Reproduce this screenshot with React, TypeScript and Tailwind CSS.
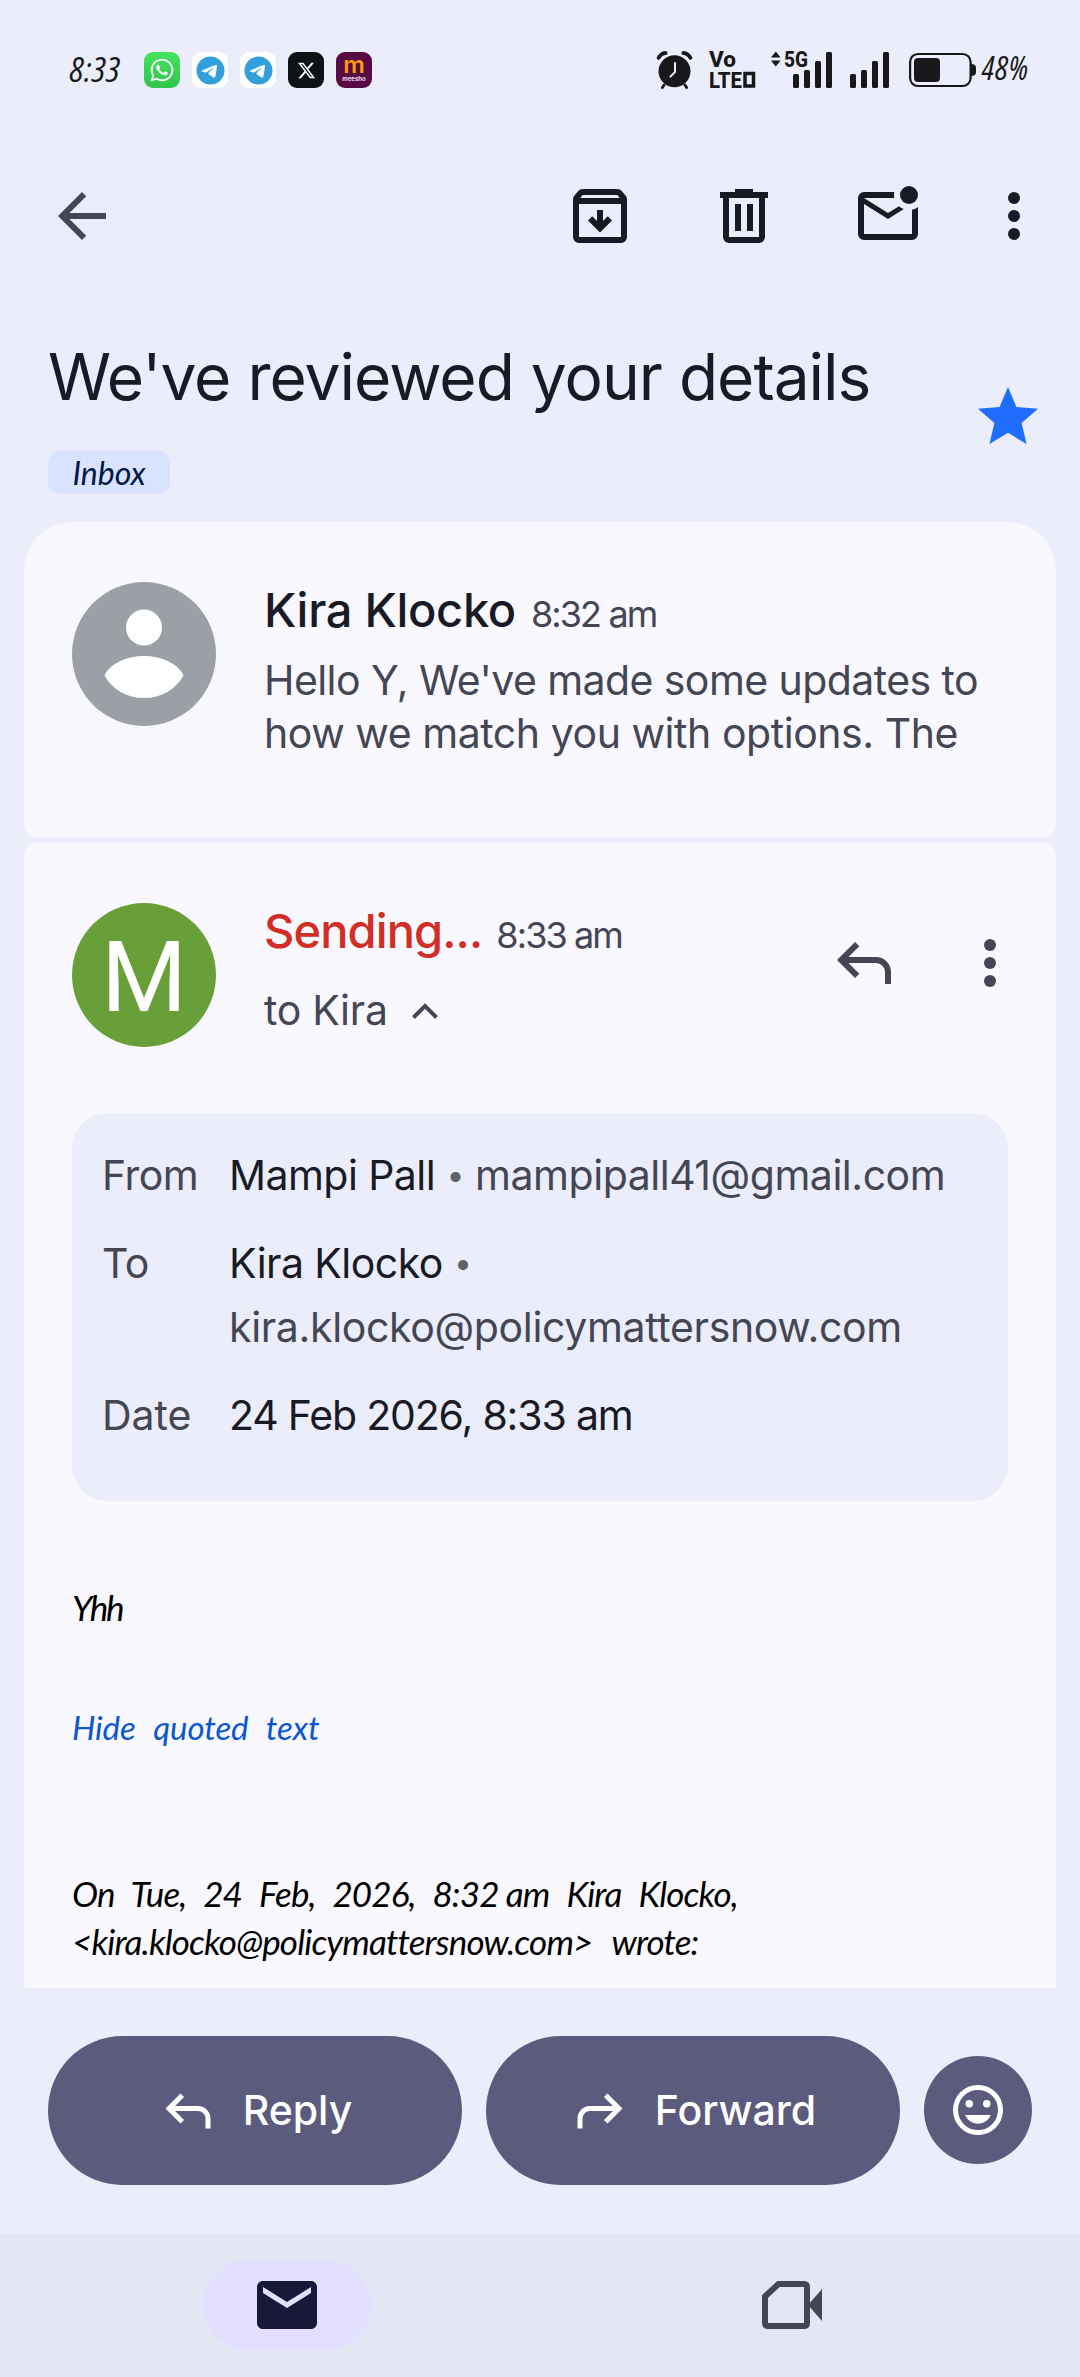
import React from 'react';
import { FaWhatsapp, FaTelegram, FaXTwitter } from 'react-icons/fa6';

type IconProps = { className?: string };

const ArrowBackIcon = ({ className }: IconProps) => (
  <svg viewBox="0 0 24 24" fill="currentColor" className={className}>
    <path d="M20 11H7.83l5.59-5.59L12 4l-8 8 8 8 1.41-1.41L7.83 13H20v-2z" />
  </svg>
);

const ArchiveIcon = ({ className }: IconProps) => (
  <svg viewBox="0 0 24 24" fill="currentColor" className={className}>
    <path
      fillRule="evenodd"
      d="M5 21q-.825 0-1.412-.587T3 19V6.525q0-.35.113-.675t.337-.6L4.7 3.725q.275-.35.687-.538T6.25 3h11.5q.45 0 .863.188t.687.537l1.25 1.525q.225.275.338.6t.112.675V19q0 .825-.587 1.413T19 21zM5.4 6h13.2l-.85-1H6.25zM5 8v11h14V8zM12 17.5l4-4-1.4-1.4-1.6 1.6V10h-2v3.7l-1.6-1.6L8 13.5z"
    />
  </svg>
);

const TrashIcon = ({ className }: IconProps) => (
  <svg viewBox="0 0 24 24" fill="currentColor" className={className}>
    <path
      fillRule="evenodd"
      d="M7 21q-.825 0-1.412-.587T5 19V6H4V4h5V3h6v1h5v2h-1v13q0 .825-.587 1.413T17 21zM17 6H7v13h10zM9 17h2V8H9zm4 0h2V8h-2z"
    />
  </svg>
);

const MarkUnreadIcon = ({ className }: IconProps) => (
  <svg viewBox="0 0 24 24" fill="currentColor" className={className}>
    <path d="M4 20q-.825 0-1.412-.587T2 18V6q0-.825.588-1.412T4 4h10.1q-.1.5-.1 1t.1 1H4l8 5 3.65-2.275q.35.325.763.563t.862.412L12 13 4 8v10h16V9.9q.575-.125 1.075-.35T22 9v9q0 .825-.587 1.413T20 20z" />
    <circle cx="19" cy="5" r="3" />
  </svg>
);

const MoreIcon = ({ className }: IconProps) => (
  <svg viewBox="0 0 24 24" fill="currentColor" className={className}>
    <circle cx="12" cy="6" r="2" />
    <circle cx="12" cy="12" r="2" />
    <circle cx="12" cy="18" r="2" />
  </svg>
);

const StarIcon = ({ className }: IconProps) => (
  <svg viewBox="0 0 24 24" fill="currentColor" className={className}>
    <path d="M12 17.27 18.18 21l-1.64-7.03L22 9.24l-7.19-.61L12 2 9.19 8.63 2 9.24l5.46 4.73L5.82 21z" />
  </svg>
);

const ReplyIcon = ({ className }: IconProps) => (
  <svg viewBox="0 0 24 24" fill="currentColor" className={className}>
    <path d="M19 19v-4q0-1.25-.875-2.125T16 12H6.825l3.6 3.6L9 17l-6-6 6-6 1.425 1.4-3.6 3.6H16q2.075 0 3.538 1.463T21 15v4z" />
  </svg>
);

const EmojiIcon = ({ className }: IconProps) => (
  <svg viewBox="0 0 24 24" className={className}>
    <circle cx="12" cy="12" r="9" fill="none" stroke="currentColor" strokeWidth="2" />
    <circle cx="8.5" cy="9.5" r="1.5" fill="currentColor" />
    <circle cx="15.5" cy="9.5" r="1.5" fill="currentColor" />
    <path d="M12 17.5c2.33 0 4.32-1.45 5.12-3.5H6.88c.8 2.05 2.79 3.5 5.12 3.5z" fill="currentColor" />
  </svg>
);

const MailIcon = ({ className }: IconProps) => (
  <svg viewBox="0 0 24 24" fill="currentColor" className={className}>
    <path d="M20 4H4c-1.1 0-1.99.9-1.99 2L2 18c0 1.1.9 2 2 2h16c1.1 0 2-.9 2-2V6c0-1.1-.9-2-2-2zm0 4-8 5-8-5V6l8 5 8-5v2z" />
  </svg>
);

const MeetIcon = ({ className }: IconProps) => (
  <svg viewBox="0 0 72 72" className={className}>
    <path d="M9 27.5 22.5 15H48q3 0 3 3v36q0 3-3 3H12q-3 0-3-3z" fill="none" stroke="currentColor" strokeWidth="6" />
    <path d="M52 36 66 20v32z" fill="currentColor" />
  </svg>
);

const AlarmIcon = ({ className }: IconProps) => (
  <svg viewBox="0 0 37 38" className={className}>
    <g fill="none" stroke="currentColor" strokeLinecap="round">
      <path d="M2.6 6.8Q5 2.4 9.6 2" strokeWidth="3.8" />
      <path d="M34.4 6.8Q32 2.4 27.4 2" strokeWidth="3.8" />
      <path d="M8 34l-1.6 2.6M29 34l1.6 2.6" strokeWidth="2.8" />
    </g>
    <circle cx="18.5" cy="20.3" r="16" fill="currentColor" />
    <path d="M19 12v9l-4.6 4.6" fill="none" stroke="#ebedfa" strokeWidth="2" strokeLinecap="round" />
  </svg>
);

const SignalBars = () => (
  <>
    <rect x="0" y="23" width="6" height="14" rx="1.5" />
    <rect x="11" y="19" width="6" height="18" rx="1.5" />
    <rect x="22" y="10" width="6" height="27" rx="1.5" />
    <rect x="33" y="1" width="6" height="36" rx="1.5" />
  </>
);

const StatusBar = () => (
  <div className="flex h-[140px] items-center pl-[70px] font-['Open_Sans',sans-serif] text-[#18181b]">
    <div className="-mt-0.5 w-[74px] text-[35px] font-stretch-condensed leading-[40px] tracking-[0.8px] whitespace-nowrap italic">8:33</div>
    <div className="flex gap-3">
      <div className="flex size-9 items-center justify-center rounded-[9px] bg-linear-to-b from-[#45e35f] to-[#2fc64b]">
        <FaWhatsapp className="size-[26px] text-white" />
      </div>
      <div className="flex size-9 items-center justify-center rounded-[9px] bg-white">
        <FaTelegram className="size-[29px] text-[#31a0db]" />
      </div>
      <div className="flex size-9 items-center justify-center rounded-[9px] bg-white">
        <FaTelegram className="size-[29px] text-[#31a0db]" />
      </div>
      <div className="flex size-9 items-center justify-center rounded-[9px] bg-[#0d1217]">
        <FaXTwitter className="size-[19px] text-white" />
      </div>
      <div className="flex size-9 flex-col items-center rounded-[9px] bg-[#570a44] font-['Inter',sans-serif]">
        <span className="mt-[3px] text-[24px] leading-[20px] font-semibold text-[#ff9a0c]">m</span>
        <span className="text-[6px] leading-[7px] font-bold text-[#f4dcec]">meesho</span>
      </div>
    </div>

    <div className="ml-[284px] flex items-center">
      <AlarmIcon className="h-[38px] w-[37px]" />
      <svg viewBox="0 0 47 38" fill="currentColor" className="ml-4 h-[38px] w-[47px] overflow-visible">
        <g fontFamily="Roboto, sans-serif" fontWeight="800" fontSize="22">
          <text x="0" y="16" textLength="27" lengthAdjust="spacingAndGlyphs">
            Vo
          </text>
          <text x="0" y="36.5" textLength="33" lengthAdjust="spacingAndGlyphs">
            LTE
          </text>
        </g>
        <rect x="36" y="22.5" width="8.5" height="12.5" fill="none" stroke="currentColor" strokeWidth="3.5" />
      </svg>
      <svg viewBox="0 0 61 38" fill="currentColor" className="ml-[15px] h-[38px] w-[61px] overflow-visible">
        <path d="M0 6.5 4.8.5l4.8 6zM0 9.5h9.6l-4.8 6z" />
        <text x="13" y="16" fontFamily="Roboto, sans-serif" fontWeight="800" fontSize="22" textLength="24" lengthAdjust="spacingAndGlyphs">
          5G
        </text>
        <g transform="translate(22 0)">
          <SignalBars />
        </g>
      </svg>
      <svg viewBox="0 0 39 38" fill="currentColor" className="ml-[18px] h-[38px] w-[39px]">
        <SignalBars />
      </svg>
      <svg viewBox="0 0 67 36" className="ml-5 h-[36px] w-[67px]">
        <rect x="1.1" y="2" width="60.5" height="32" rx="8" fill="none" stroke="currentColor" strokeWidth="2.2" />
        <rect x="5" y="6" width="26" height="24" rx="4" fill="currentColor" />
        <path d="M62 12q5 0 5 4v4q0 4-5 4z" fill="currentColor" />
      </svg>
      <div className="-mt-[5px] ml-[6px] text-[32px] font-stretch-condensed leading-[40px] tracking-[1.2px] italic">48%</div>
    </div>
  </div>
);

const Toolbar = () => (
  <div className="flex h-[151px] items-center justify-between pr-[30px] pl-[46px] text-[#181a26]">
    <ArrowBackIcon className="size-[72px] text-[#444654]" />
    <div className="flex">
      <ArchiveIcon className="size-[72px]" />
      <TrashIcon className="ml-[72px] size-[72px]" />
      <MarkUnreadIcon className="ml-[72px] size-[72px]" />
      <MoreIcon className="ml-[54px] size-[72px]" />
    </div>
  </div>
);

const Subject = () => (
  <div className="flex h-[231px] justify-between pt-[46px] pr-9 pl-12">
    <div>
      <h1 className="text-[64px] leading-[80px] tracking-[-1px] whitespace-nowrap">We've reviewed your details</h1>
      <span className="mt-[34px] flex h-[43px] w-[122px] items-center justify-center rounded-xl bg-[#d9e2ff] font-['Lato',sans-serif] text-[32px] text-[#001945] italic">
        Inbox
      </span>
    </div>
    <StarIcon className="mt-[44px] size-[72px] text-[#1f6cff]" />
  </div>
);

const PreviousMessage = () => (
  <div className="flex h-[315px] rounded-t-[48px] rounded-b-xl bg-[#f9f8ff] px-12 pt-[60px]">
    <svg viewBox="0 0 144 144" className="size-36 shrink-0">
      <circle cx="72" cy="72" r="72" fill="#9aa0a6" />
      <circle cx="72" cy="45.5" r="18" fill="#fff" />
      <path d="M32.5 93.5C38 81 56 74 72 74s34 7 39.5 19.5C103 108 89 116 72 116s-31-8-39.5-22.5z" fill="#fff" />
    </svg>
    <div className="-mt-0.5 ml-12 whitespace-nowrap">
      <div className="flex items-baseline gap-[15px] leading-[60px]">
        <span className="text-[47px] font-medium tracking-[-0.3px]">Kira Klocko</span>
        <span className="text-[36px] tracking-[-1.9px] text-[#444654]">8:32 am</span>
      </div>
      <p className="mt-2.5 text-[41px] leading-[53px] text-[#444654]">
        <span className="tracking-[-0.57px]">Hello Y, We've made some updates to</span>
        <br />
        <span className="tracking-[-0.45px]">how we match you with options. The</span>
      </p>
    </div>
  </div>
);

const MessageDetails = () => (
  <div className="mt-[66px] flex h-[388px] w-[936px] flex-col gap-6 rounded-[36px] bg-[#ebedfa] pt-[30px] pl-[30px] text-[41px] leading-[64px] tracking-[-0.55px] whitespace-nowrap">
    <div className="flex">
      <span className="w-[127px] text-[#444654]">From</span>
      <span>Mampi Pall</span>
      <span className="mx-[8px] w-[24px] text-center text-[32px] text-[#5f6368]">•</span>
      <span className="tracking-[-0.47px] text-[#444654]">mampipall41@gmail.com</span>
    </div>
    <div className="flex">
      <span className="w-[127px] text-[#444654]">To</span>
      <div>
        <div className="flex">
          <span>Kira Klocko</span>
          <span className="ml-[8px] w-[24px] text-center text-[32px] text-[#5f6368]">•</span>
        </div>
        <div className="tracking-[-0.34px] text-[#444654]">kira.klocko@policymattersnow.com</div>
      </div>
    </div>
    <div className="flex">
      <span className="w-[127px] tracking-[0px] text-[#444654]">Date</span>
      <span className="tracking-[-1.18px]">24 Feb 2026, 8:33 am</span>
    </div>
  </div>
);

const CurrentMessage = () => (
  <div className="mt-1.5 h-[1145px] rounded-t-xl bg-[#f9f8ff] pt-[60px] pr-[30px] pl-12">
    <div className="flex h-36">
      <div className="flex size-36 shrink-0 items-center justify-center rounded-full bg-[#689f38] pt-1 font-['Roboto',sans-serif] text-[98px] font-[450] text-white">
        M
      </div>
      <div className="-mt-0.5 ml-12 whitespace-nowrap">
        <div className="flex items-baseline gap-[14px] leading-[60px]">
          <span className="text-[47px] font-medium tracking-[-0.9px] text-[#d22e26]">Sending...</span>
          <span className="text-[36px] tracking-[-1.9px] text-[#444654]">8:33 am</span>
        </div>
        <div className="mt-[19px] flex items-center text-[41px] leading-[53px] tracking-[-0.3px] text-[#444654]">
          to Kira
          <svg viewBox="0 0 26 16" className="ml-[24px] h-4 w-[26px]" fill="none" stroke="currentColor" strokeWidth="4">
            <path d="M1.5 14.5 13 3l11.5 11.5" />
          </svg>
        </div>
      </div>
      <div className="mt-[24px] ml-auto flex gap-[54px] text-[#444654]">
        <ReplyIcon className="size-[72px]" />
        <MoreIcon className="size-[72px]" />
      </div>
    </div>
    <MessageDetails />
    <div className="font-['Lato',sans-serif] text-[35px] whitespace-nowrap text-black italic">
      <p className="mt-[82px] leading-[48px] tracking-[-2.5px]">Yhh</p>
      <p className="mt-[72px] text-[33px] leading-[48px] tracking-[-0.1px] [word-spacing:10px] text-[#0b57d0]">Hide quoted text</p>
      <p className="mt-[118px] leading-[48px] tracking-[-0.85px]">
        <span className="[word-spacing:9.5px]">On Tue, 24 Feb, 2026, 8:32&#8239;am Kira Klocko,</span>
        <br />
        <span className="[word-spacing:12px]">&lt;kira.klocko@policymattersnow.com&gt; wrote:</span>
      </p>
    </div>
  </div>
);

const BottomActions = () => (
  <div className="flex h-[245px] gap-6 px-12 pt-12 text-[41px] font-medium text-white">
    <button className="flex h-[149px] w-[414px] items-center justify-center gap-[25px] rounded-full bg-[#5c5b7d]">
      <ReplyIcon className="size-[60px]" />
      Reply
    </button>
    <button className="flex h-[149px] w-[414px] items-center justify-center gap-[25px] rounded-full bg-[#5c5b7d]">
      <ReplyIcon className="size-[60px] -scale-x-100" />
      Forward
    </button>
    <button className="mt-5 flex size-[108px] items-center justify-center rounded-full bg-[#5c5b7d]">
      <EmojiIcon className="size-[60px]" />
    </button>
  </div>
);

const BottomNav = () => (
  <div className="flex h-36 items-center justify-between bg-[#e4e6f3] pr-[204px] pl-[203px]">
    <div className="flex h-[90px] w-[168px] items-center justify-center rounded-full bg-[#e2dfff]">
      <MailIcon className="size-[72px] text-[#181837]" />
    </div>
    <div className="flex h-[90px] w-[168px] items-center justify-center">
      <MeetIcon className="size-[72px] text-[#444654]" />
    </div>
  </div>
);

const App = () => {
  return (
    <div className="h-[2377px] w-[1080px] overflow-hidden bg-[#ebedfa] font-['Inter',sans-serif] text-[#181a26]">
      <StatusBar />
      <Toolbar />
      <Subject />
      <div className="px-6">
        <PreviousMessage />
        <CurrentMessage />
      </div>
      <BottomActions />
      <BottomNav />
    </div>
  );
};

export default App;
